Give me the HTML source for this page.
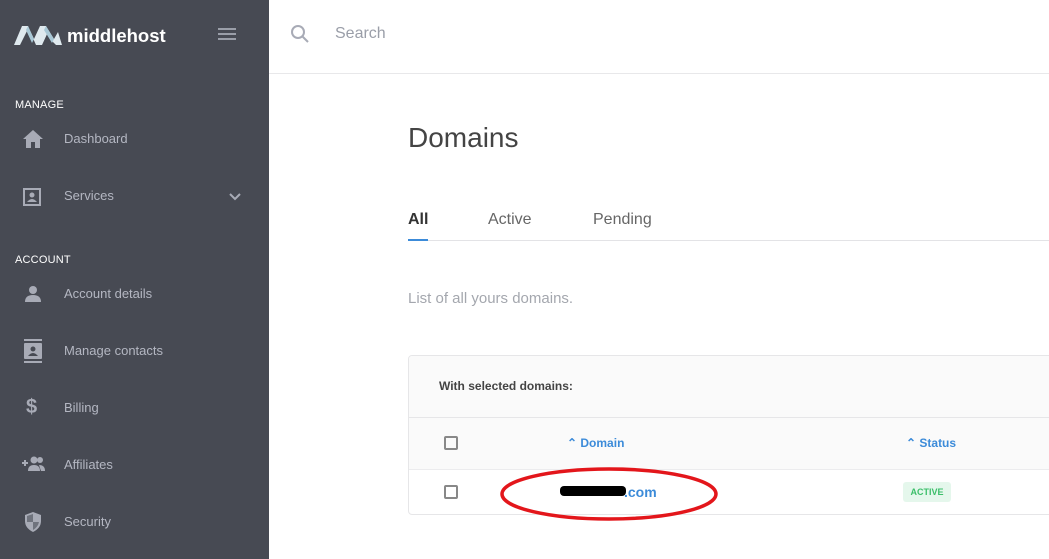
<!DOCTYPE html>
<html><head><style>
*{box-sizing:border-box;margin:0;padding:0}
body{width:1049px;height:559px;overflow:hidden;font-family:"Liberation Sans",sans-serif;background:#fff;position:relative}
.sb{position:absolute;left:0;top:0;width:269px;height:559px;background:#474a53}
.abs{position:absolute}
.sec{position:absolute;left:15px;font-size:11px;color:#fff;letter-spacing:.2px}
.it{position:absolute;left:64px;font-size:13px;color:#b4b7c2}
.ic{position:absolute;left:22px}
</style></head><body>
<div class="sb">
<svg class="abs" style="left:14px;top:24px" width="48" height="22" viewBox="0 0 48 22">
<path d="M0 21 L8 2 L14 2 L20 15 L26 2 L32 2 L40 15 L44 8 L48 21 L42 21 L38 17 L34 8 L28 21 L22 21 L18 12 L14 5 L8 17 L6 21Z" fill="#dfe9ee"/>
<path d="M14 2 L20 15 L18 19 L12 6Z M32 2 L40 15 L38 19 L30 6Z" fill="#a9c8d6"/>
</svg>
<div class="abs" style="left:67px;top:25px;font-size:18.5px;font-weight:bold;color:#fff">middlehost</div>
<div class="abs" style="left:218px;top:28px;width:18px;height:2px;background:#9a9ea8;box-shadow:0 5px 0 #9a9ea8,0 10px 0 #9a9ea8"></div>
<div class="sec" style="top:99px">MANAGE</div>
<svg class="ic" style="top:129px" width="22" height="20" viewBox="0 0 22 20"><path d="M11 1 L21 10 H18 V19 H13 V13 H9 V19 H4 V10 H1Z" fill="#a8abb6"/></svg>
<div class="it" style="top:131px">Dashboard</div>
<svg class="ic" style="top:187px" width="20" height="20" viewBox="0 0 20 20"><rect x="2" y="2" width="16" height="16" fill="none" stroke="#a8abb6" stroke-width="2"/><circle cx="10" cy="8" r="2.5" fill="#a8abb6"/><path d="M5 15 Q10 9 15 15Z" fill="#a8abb6"/></svg>
<div class="it" style="top:188px">Services</div>
<svg class="abs" style="left:228px;top:192px" width="14" height="9" viewBox="0 0 14 9"><path d="M2 2 L7 7 L12 2" fill="none" stroke="#a8abb6" stroke-width="2"/></svg>
<div class="sec" style="top:254px">ACCOUNT</div>
<svg class="ic" style="top:284px" width="22" height="20" viewBox="0 0 22 20"><circle cx="11" cy="6" r="4" fill="#a8abb6"/><path d="M3 18 Q3 11 11 11 Q19 11 19 18Z" fill="#a8abb6"/></svg>
<div class="it" style="top:286px">Account details</div>
<svg class="ic" style="top:339px" width="22" height="24" viewBox="0 0 22 24"><rect x="2" y="0" width="18" height="2" fill="#a8abb6"/><rect x="2" y="22" width="18" height="2" fill="#a8abb6"/><rect x="2" y="4" width="18" height="16" rx="1" fill="#a8abb6"/><circle cx="11" cy="10" r="2.5" fill="#474a53"/><path d="M6 17 Q11 11 16 17Z" fill="#474a53"/></svg>
<div class="it" style="top:343px">Manage contacts</div>
<div class="abs" style="left:26px;top:396px;font-size:20px;font-weight:bold;color:#a8abb6">$</div>
<div class="it" style="top:400px">Billing</div>
<svg class="ic" style="top:456px" width="24" height="16" viewBox="0 0 24 16"><path d="M0 7 H6 M3 4 V10" stroke="#a8abb6" stroke-width="2"/><circle cx="12" cy="4" r="3.5" fill="#a8abb6"/><circle cx="18" cy="4" r="3" fill="#a8abb6"/><path d="M6 15 Q6 9 12 9 Q18 9 18 15Z M17 9 Q23 9 23 15 H19Z" fill="#a8abb6"/></svg>
<div class="it" style="top:457px">Affiliates</div>
<svg class="ic" style="top:511px" width="22" height="22" viewBox="0 0 22 22"><path d="M11 1 L19 4 V10 Q19 17 11 21 Q3 17 3 10 V4Z" fill="#a8abb6"/><path d="M11 3 V11 H17 Q16 16 11 19Z M11 11 H5 V5 L11 3Z" fill="#6f737d"/></svg>
<div class="it" style="top:514px">Security</div>
</div>
<svg class="abs" style="left:290px;top:24px" width="20" height="20" viewBox="0 0 20 20"><circle cx="8" cy="8" r="6" fill="none" stroke="#a8abb6" stroke-width="2"/><path d="M12.5 12.5 L18 18" stroke="#a8abb6" stroke-width="2"/></svg>
<div class="abs" style="left:335px;top:25px;font-size:16px;color:#9a9ea8">Search</div>
<div class="abs" style="left:269px;top:73px;width:780px;height:1px;background:#e8e8ea"></div>
<div class="abs" style="left:408px;top:122px;font-size:28px;color:#444">Domains</div>
<div class="abs" style="left:408px;top:211px;font-size:16px;color:#333;font-weight:bold">All</div>
<div class="abs" style="left:488px;top:211px;font-size:16px;color:#666">Active</div>
<div class="abs" style="left:593px;top:211px;font-size:16px;color:#666">Pending</div>
<div class="abs" style="left:408px;top:240px;width:641px;height:1px;background:#e3e3e6"></div>
<div class="abs" style="left:408px;top:239px;width:20px;height:2px;background:#3c8bd9"></div>
<div class="abs" style="left:408px;top:290px;font-size:15px;color:#a4a7ae">List of all yours domains.</div>
<div class="abs" style="left:408px;top:355px;width:660px;height:160px;border:1px solid #e6e6e8;border-radius:4px;background:#fff;overflow:hidden">
<div style="height:62px;background:#fafafa;border-bottom:1px solid #e6e6e8"></div>
<div style="height:52px;background:#fafafa;border-bottom:1px solid #ececee"></div>
</div>
<div class="abs" style="left:439px;top:379px;font-size:12px;font-weight:bold;color:#444">With selected domains:</div>
<div class="abs" style="left:444px;top:436px;width:14px;height:14px;border:2px solid #888;border-radius:2px"></div>
<div class="abs" style="left:444px;top:485px;width:14px;height:14px;border:2px solid #888;border-radius:2px"></div>
<div class="abs" style="left:567px;top:436px;font-size:12px;font-weight:bold;color:#3c8bd9">⌃ Domain</div>
<div class="abs" style="left:906px;top:436px;font-size:12px;font-weight:bold;color:#3c8bd9">⌃ Status</div>
<div class="abs" style="left:560px;top:486px;width:66px;height:10px;background:#000;border-radius:4px"></div>
<div class="abs" style="left:624px;top:484px;font-size:14px;font-weight:bold;color:#3c8bd9">.com</div>
<div class="abs" style="left:903px;top:482px;width:48px;height:20px;background:#e5f7ec;border-radius:3px;font-size:9px;font-weight:bold;color:#3cbf6a;text-align:center;line-height:20px">ACTIVE</div>
<svg class="abs" style="left:498px;top:465px" width="224" height="58" viewBox="0 0 224 58"><ellipse cx="111" cy="29" rx="107" ry="25" fill="none" stroke="#e3161b" stroke-width="3.5"/></svg>
</body></html>
